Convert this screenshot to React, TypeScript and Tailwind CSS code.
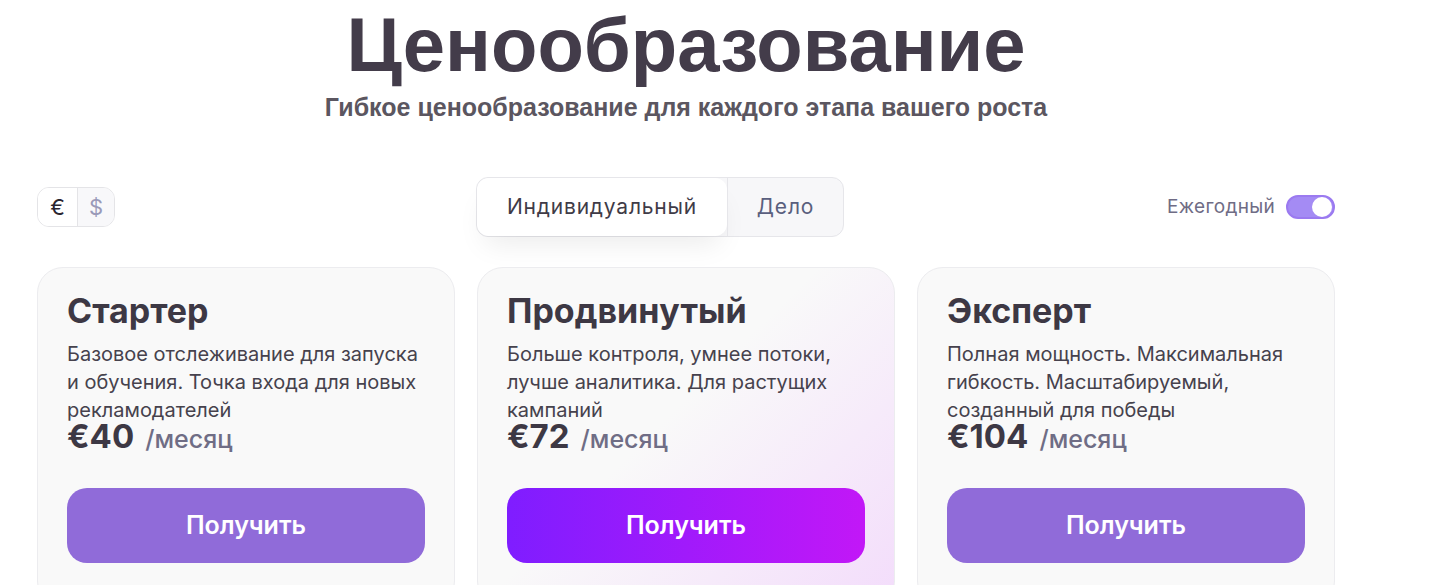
import React from "react";

const plans = [
  {
    name: "Стартер",
    desc: "Базовое отслеживание для запуска и обучения. Точка входа для новых рекламодателей",
    price: "€40",
    featured: false,
  },
  {
    name: "Продвинутый",
    desc: "Больше контроля, умнее потоки, лучше аналитика. Для растущих кампаний",
    price: "€72",
    featured: true,
  },
  {
    name: "Эксперт",
    desc: "Полная мощность. Максимальная гибкость. Масштабируемый, созданный для победы",
    price: "€104",
    featured: false,
  },
];

export default function App() {
  return (
    <div className="min-h-[585px] w-full overflow-hidden bg-white font-['Inter',sans-serif]">
      <div className="ml-[37px] flex w-[1298px] flex-col">
        <div className="flex flex-col items-center font-['Liberation_Sans',Arial,sans-serif]">
          <h1 className="mt-[5px] text-[76px] font-bold leading-[80px] text-[#433c4a]">
            Ценообразование
          </h1>
          <p className="mt-[8px] text-[25px] font-bold leading-[28px] text-[#5b5660]">
            Гибкое ценообразование для каждого этапа вашего роста
          </p>
        </div>

        <div className="mt-[56px] flex items-center">
          <div className="flex h-[40px] w-[78px] overflow-hidden rounded-[12px] border border-[#e4e4e7]">
            <div className="flex w-[39px] items-center justify-center bg-white text-[22px] text-[#2a2530]">€</div>
            <div className="flex flex-1 items-center justify-center border-l border-[#e4e4e7] bg-[#f8f8fa] text-[22px] text-[#9a9ab8]">$</div>
          </div>

          <div className="ml-[361px] flex h-[60px] w-[368px] rounded-[12px] border border-[#e6e6ea] bg-[#f7f7f9]">
            <div className="flex w-[250px] items-center justify-center rounded-[12px] bg-white text-[21px] tracking-[0.8px] text-[#3f3b47] shadow-[0_16px_28px_-8px_rgba(0,0,0,0.08)]">
              Индивидуальный
            </div>
            <div className="flex flex-1 items-center justify-center border-l border-[#e6e6ea] text-[21px] tracking-[0.8px] text-[#5a5f7e]">
              Дело
            </div>
          </div>

          <div className="ml-auto flex items-center gap-[11px]">
            <span className="text-[19px] tracking-[0.3px] text-[#6f6c85]">Ежегодный</span>
            <div className="flex h-[24px] w-[49px] items-center justify-end rounded-full border-2 border-[#9b7af0] bg-[#a48bf4] px-[1px]">
              <div className="h-[20px] w-[20px] rounded-full bg-white" />
            </div>
          </div>
        </div>

        <div className="mt-[30px] grid grid-cols-3 gap-[22px]">
          {plans.map((p) => (
            <div
              key={p.name}
              className={`h-[340px] rounded-[26px] border border-[#ececef] px-[29px] pt-[23px] ${
                p.featured
                  ? "bg-[linear-gradient(135deg,#f9f9f9_0%,#f9f9f9_45%,#f3dcfb_100%)]"
                  : "bg-[#f9f9f9]"
              }`}
            >
              <h2 className="text-[34px] font-bold leading-[40px] text-[#3d3844]">{p.name}</h2>
              <p className="mt-[9px] text-[20px] leading-[28px] text-[#46424d]">{p.desc}</p>
              <div className="flex items-baseline gap-[11px]">
                <span className="text-[33px] font-bold leading-[24px] text-[#3d3844]">{p.price}</span>
                <span className="text-[25px] font-medium leading-[24px] text-[#6f6d85]">/месяц</span>
              </div>
              <button
                className={`mt-[37px] flex h-[75px] w-full items-center justify-center rounded-[20px] text-[25px] font-semibold text-white ${
                  p.featured
                    ? "bg-[linear-gradient(90deg,#7f1dff_0%,#c217f7_100%)]"
                    : "bg-[#906bd9]"
                }`}
              >
                Получить
              </button>
            </div>
          ))}
        </div>
      </div>
    </div>
  );
}
